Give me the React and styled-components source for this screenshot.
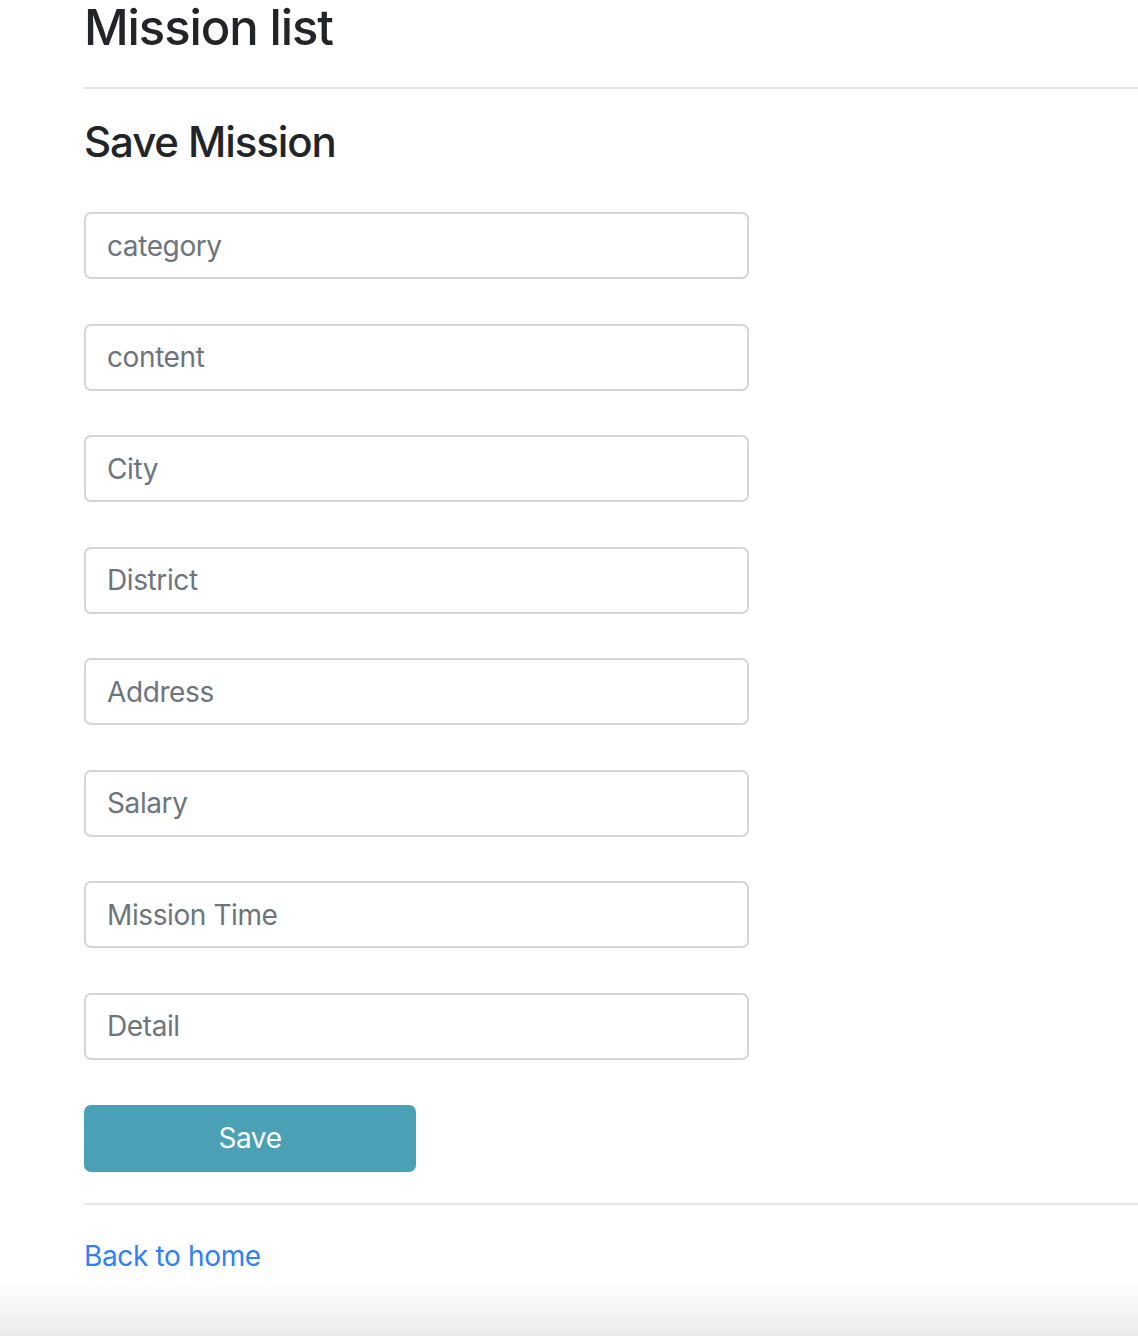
import React, {useState} from 'react';
import styled, {createGlobalStyle} from 'styled-components';

const GlobalStyle = createGlobalStyle`
    html, body {
        margin: 0;
        padding: 0;
    }
    body {
        font-family: Inter, "Noto Sans", "Liberation Sans", sans-serif;
        color: #212529;
        background: #fff;
    }
    * {
        box-sizing: border-box;
    }
`;

const Page = styled.div`
    min-height: 100vh;
    padding-left: 84px;
    overflow: hidden;
    background: linear-gradient(to bottom, #ffffff calc(100% - 54px), #ebebeb 100%);
`;

const Title = styled.h1`
    margin: -1px 0 0;
    font-size: 49px;
    font-weight: 500;
    line-height: 1.2;
    letter-spacing: -1.1px;
`;

const Rule = styled.hr`
    margin: ${p => p.$top}px 0 ${p => p.$bottom}px;
    border: 0;
    border-top: 2px solid #e6e6e6;
`;

const SubTitle = styled.h4`
    margin: 0 0 45px;
    font-size: 42px;
    font-weight: 500;
    line-height: 1.2;
    letter-spacing: -1.1px;
`;

const MissionForm = styled.form`
    width: 665px;
    display: flex;
    flex-direction: column;
`;

const Field = styled.input`
    display: block;
    width: 100%;
    height: 67px;
    margin-bottom: 44.5px;
    padding: 0 21px;
    font-family: inherit;
    font-size: 28px;
    letter-spacing: -0.4px;
    color: #495057;
    background: #fff;
    border: 2px solid #d2d6da;
    border-radius: 7px;
    outline: none;
    &::placeholder {
        color: #6c757d;
    }
`;

const SaveButton = styled.button`
    width: 332px;
    height: 67px;
    margin-top: 0.5px;
    border: 0;
    border-radius: 7px;
    background: #4aa0b5;
    color: #fff;
    font-family: inherit;
    font-size: 28px;
    letter-spacing: -0.4px;
    cursor: pointer;
`;

const HomeLink = styled.a`
    display: inline-block;
    font-size: 28px;
    line-height: 42px;
    letter-spacing: -0.35px;
    color: #3080f7;
    text-decoration: none;
`;

const fields = [
    'category',
    'content',
    'City',
    'District',
    'Address',
    'Salary',
    'Mission Time',
    'Detail',
];

const App = () => {
    const [values, setValues] = useState({});

    const onChange = (name) => (e) => {
        setValues({...values, [name]: e.target.value});
    };

    return (
        <Page>
            <GlobalStyle />
            <Title>Mission list</Title>
            <Rule $top={29} $bottom={28} />
            <SubTitle>Save Mission</SubTitle>
            <MissionForm onSubmit={(e) => e.preventDefault()}>
                {fields.map((name) => (
                    <Field
                        key={name}
                        type="text"
                        placeholder={name}
                        value={values[name] || ''}
                        onChange={onChange(name)}
                    />
                ))}
            </MissionForm>
            <SaveButton type="button">Save</SaveButton>
            <Rule $top={31} $bottom={30} />
            <HomeLink href="#">Back to home</HomeLink>
        </Page>
    );
};

export default App;
